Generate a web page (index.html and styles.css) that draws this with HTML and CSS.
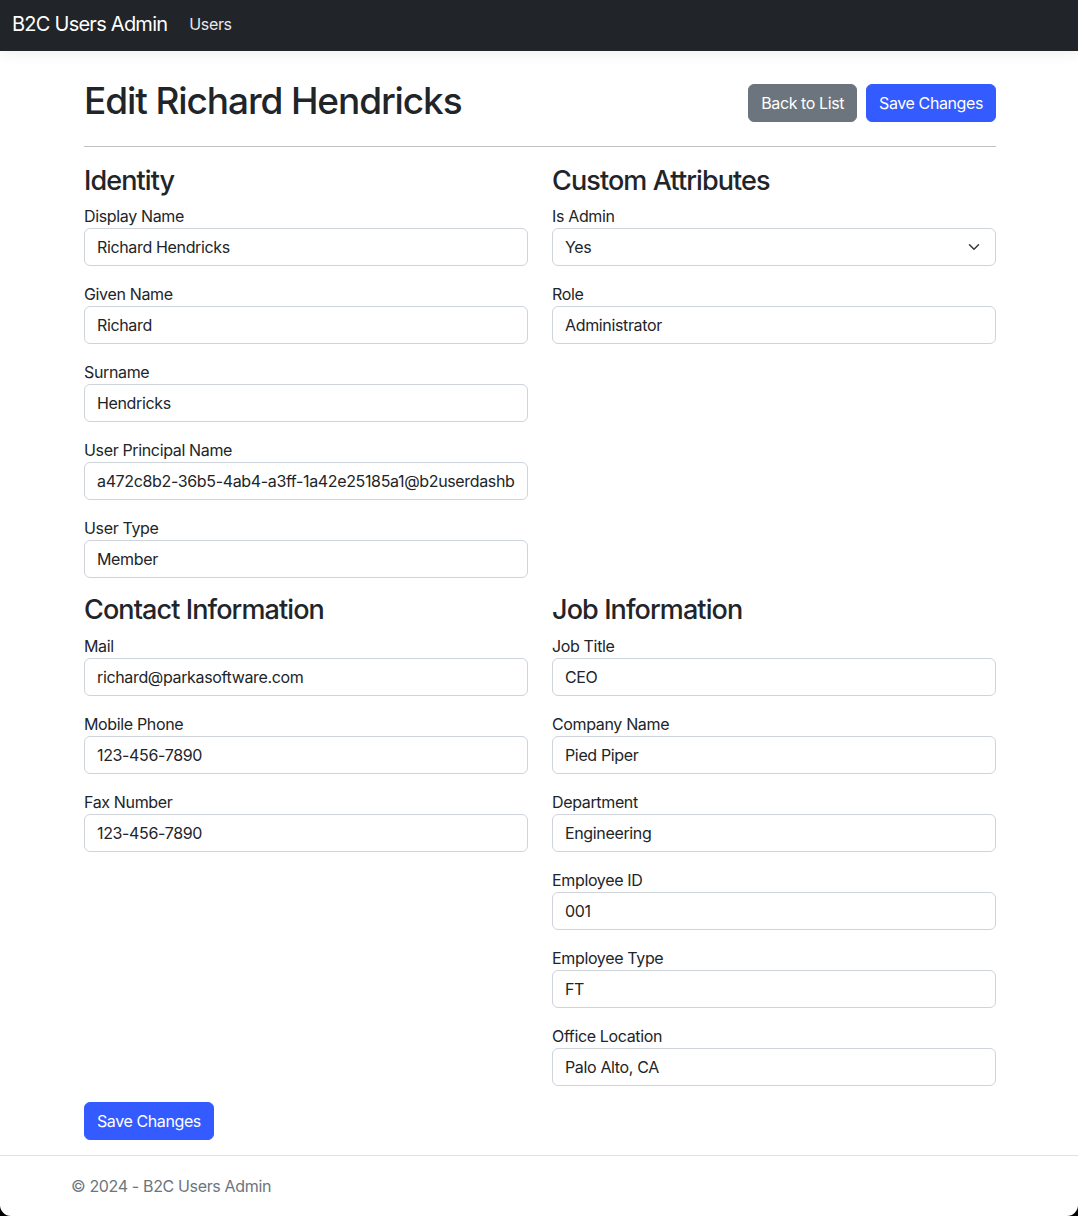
FILE: index.html
```html
<!DOCTYPE html>
<html lang="en">
<head>
<meta charset="utf-8">
<title>Edit Richard Hendricks - B2C Users Admin</title>
<link rel="stylesheet" href="styles.css">
</head>
<body>
<header class="navbar">
  <a class="brand" href="#">B2C Users Admin</a>
  <a class="nav-link" href="#">Users</a>
</header>
<div class="container">
  <main class="main">
    <div class="page-head">
      <h1 class="page-title">Edit Richard Hendricks</h1>
      <div class="actions">
        <button class="btn btn-secondary" type="button">Back to List</button>
        <button class="btn btn-primary" type="button">Save Changes</button>
      </div>
    </div>
    <hr class="divider">
    <form class="form">
      <div class="grid">
        <section class="group">
          <h3 class="group-title">Identity</h3>
          <div class="field"><label class="label">Display Name</label><input class="input" value="Richard Hendricks"></div>
          <div class="field"><label class="label">Given Name</label><input class="input" value="Richard"></div>
          <div class="field"><label class="label">Surname</label><input class="input" value="Hendricks"></div>
          <div class="field"><label class="label">User Principal Name</label><input class="input" value="a472c8b2-36b5-4ab4-a3ff-1a42e25185a1@b2userdashboard.onmicrosoft.com"></div>
          <div class="field"><label class="label">User Type</label><input class="input" value="Member"></div>
        </section>
        <section class="group">
          <h3 class="group-title">Custom Attributes</h3>
          <div class="field"><label class="label">Is Admin</label>
            <div class="select-wrap">
              <select class="input select"><option>Yes</option><option>No</option></select>
              <svg class="chevron" width="16" height="12" viewBox="0 0 16 16"><path d="m2 5 6 6 6-6" fill="none" stroke="#343a40" stroke-width="2" stroke-linecap="round" stroke-linejoin="round"/></svg>
            </div>
          </div>
          <div class="field"><label class="label">Role</label><input class="input" value="Administrator"></div>
        </section>
        <section class="group">
          <h3 class="group-title">Contact Information</h3>
          <div class="field"><label class="label">Mail</label><input class="input" value="richard@parkasoftware.com"></div>
          <div class="field"><label class="label">Mobile Phone</label><input class="input" value="123-456-7890"></div>
          <div class="field"><label class="label">Fax Number</label><input class="input" value="123-456-7890"></div>
        </section>
        <section class="group">
          <h3 class="group-title">Job Information</h3>
          <div class="field"><label class="label">Job Title</label><input class="input" value="CEO"></div>
          <div class="field"><label class="label">Company Name</label><input class="input" value="Pied Piper"></div>
          <div class="field"><label class="label">Department</label><input class="input" value="Engineering"></div>
          <div class="field"><label class="label">Employee ID</label><input class="input" value="001"></div>
          <div class="field"><label class="label">Employee Type</label><input class="input" value="FT"></div>
          <div class="field"><label class="label">Office Location</label><input class="input" value="Palo Alto, CA"></div>
        </section>
      </div>
      <button class="btn btn-primary" type="button">Save Changes</button>
    </form>
  </main>
</div>
<footer class="footer">
  <div class="footer-inner">&copy; 2024 - B2C Users Admin</div>
</footer>
</body>
</html>
```
FILE: styles.css
```css
* { box-sizing: border-box; }
html {
  background: #000;
  height: 100%;
}
body {
  margin: 0;
  min-height: 100%;
  background: #fff;
  color: #212529;
  font-family: Inter, "Noto Sans", "Liberation Sans", sans-serif;
  font-size: 16px;
  line-height: 1.5;
  letter-spacing: -0.35px;
  border-radius: 0 0 11px 11px;
  overflow: hidden;
  display: flex;
  flex-direction: column;
}
.navbar {
  height: 51px;
  background: #212529;
  display: flex;
  align-items: center;
  padding: 0 12px 4px;
  box-shadow: 0 4px 12px rgba(0,0,0,.06);
}
.brand {
  color: #fff;
  font-size: 20px;
  text-decoration: none;
  margin-right: 14px;
  letter-spacing: -0.75px;
}
.nav-link {
  color: #e9e9ea;
  text-decoration: none;
  padding: 0 8px;
  font-size: 16px;
}
.container {
  width: 960px;
  margin: 0 auto;
  padding: 0 23px 0 25px;
  flex: 1;
}
.main { padding: 29px 0 15px; }
.page-head {
  display: flex;
  justify-content: space-between;
  align-items: center;
  height: 46px;
}
.page-title {
  margin: 0;
  padding-bottom: 4px;
  font-size: 37px;
  font-weight: 500;
  line-height: 1.2;
  letter-spacing: -1.1px;
}
.actions { display: flex; gap: 9px; }
.btn {
  font-family: inherit;
  font-size: 16px;
  line-height: 24px;
  letter-spacing: -0.4px;
  padding: 6px 12px;
  border: 1px solid transparent;
  border-radius: 6px;
  color: #fff;
  cursor: pointer;
}
.btn-secondary { background: #6c757d; border-color: #6c757d; }
.btn-primary { background: #335bff; border-color: #335bff; }
.divider {
  margin: 20px 0 18px;
  border: 0;
  border-top: 1px solid #bfc1c3;
}
.grid {
  display: grid;
  grid-template-columns: 1fr 1fr;
  column-gap: 24px;
}
.group-title {
  margin: 0 0 7px;
  font-size: 27px;
  font-weight: 500;
  line-height: 1.2;
  letter-spacing: -0.9px;
}
.field { margin-bottom: 16px; }
.label { display: block; line-height: 24px; }
.input {
  display: block;
  width: 100%;
  height: 38px;
  padding: 6px 12px;
  font-family: inherit;
  font-size: 16px;
  letter-spacing: -0.35px;
  color: #212529;
  background: #fff;
  border: 1px solid #ced4da;
  border-radius: 6px;
  outline: none;
}
.select-wrap { position: relative; }
.select {
  appearance: none;
  -webkit-appearance: none;
}
.chevron {
  position: absolute;
  right: 14px;
  top: 13px;
  pointer-events: none;
}
.footer {
  border-top: 1px solid #dee2e6;
}
.footer-inner {
  width: 960px;
  margin: 0 auto;
  padding: 0 12px;
  line-height: 60px;
  color: #6c757d;
}
```
